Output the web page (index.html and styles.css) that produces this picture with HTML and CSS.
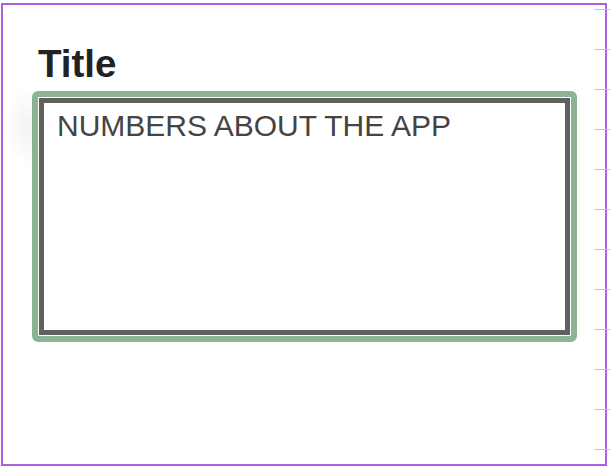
FILE: index.html
```html
<!DOCTYPE html>
<html>
<head>
<meta charset="utf-8">
<link rel="stylesheet" href="styles.css">
</head>
<body>
<div class="frame">
  <div class="shade"></div>
  <h1 class="title">Title</h1>
  <div class="card">
    <div class="inner">NUMBERS ABOUT THE APP</div>
  </div>
</div>
<div class="ruler">
  <span></span><span></span><span></span><span></span><span></span><span></span>
  <span></span><span></span><span></span><span></span><span></span><span></span>
</div>
</body>
</html>
```
FILE: styles.css
```css
html, body {
  margin: 0;
  padding: 0;
  background: #fff;
  width: 610px;
  height: 466px;
  overflow: hidden;
  font-family: "Liberation Sans", Arial, sans-serif;
}
.frame {
  position: relative;
  box-sizing: border-box;
  width: 606px;
  height: 463px;
  margin: 3px 0 0 1px;
  border: 2px solid #ac62e0;
  padding: 37px 0 0 29px;
}
.shade {
  position: absolute;
  left: 2px;
  top: 82px;
  width: 28px;
  height: 80px;
  background: radial-gradient(ellipse at 80% 50%, rgba(0,0,0,0.05), rgba(0,0,0,0) 70%);
}
.title {
  margin: 0 0 5px 6px;
  font-size: 38.5px;
  line-height: 44px;
  font-weight: bold;
  color: #222;
}
.card {
  box-sizing: border-box;
  width: 545px;
  height: 251px;
  border: 6px solid #8cb494;
  border-radius: 6px;
  padding: 1px;
  background: #fff;
}
.inner {
  box-sizing: border-box;
  height: 100%;
  border: 5px solid #606060;
  padding: 6px 13px;
  font-size: 30px;
  color: #444;
}
.ruler {
  position: absolute;
  top: 9px;
  left: 594px;
  width: 16px;
  display: flex;
  flex-direction: column;
  gap: 39px;
}
.ruler span {
  display: block;
  height: 1px;
  background: #c4c4c4;
}
```
